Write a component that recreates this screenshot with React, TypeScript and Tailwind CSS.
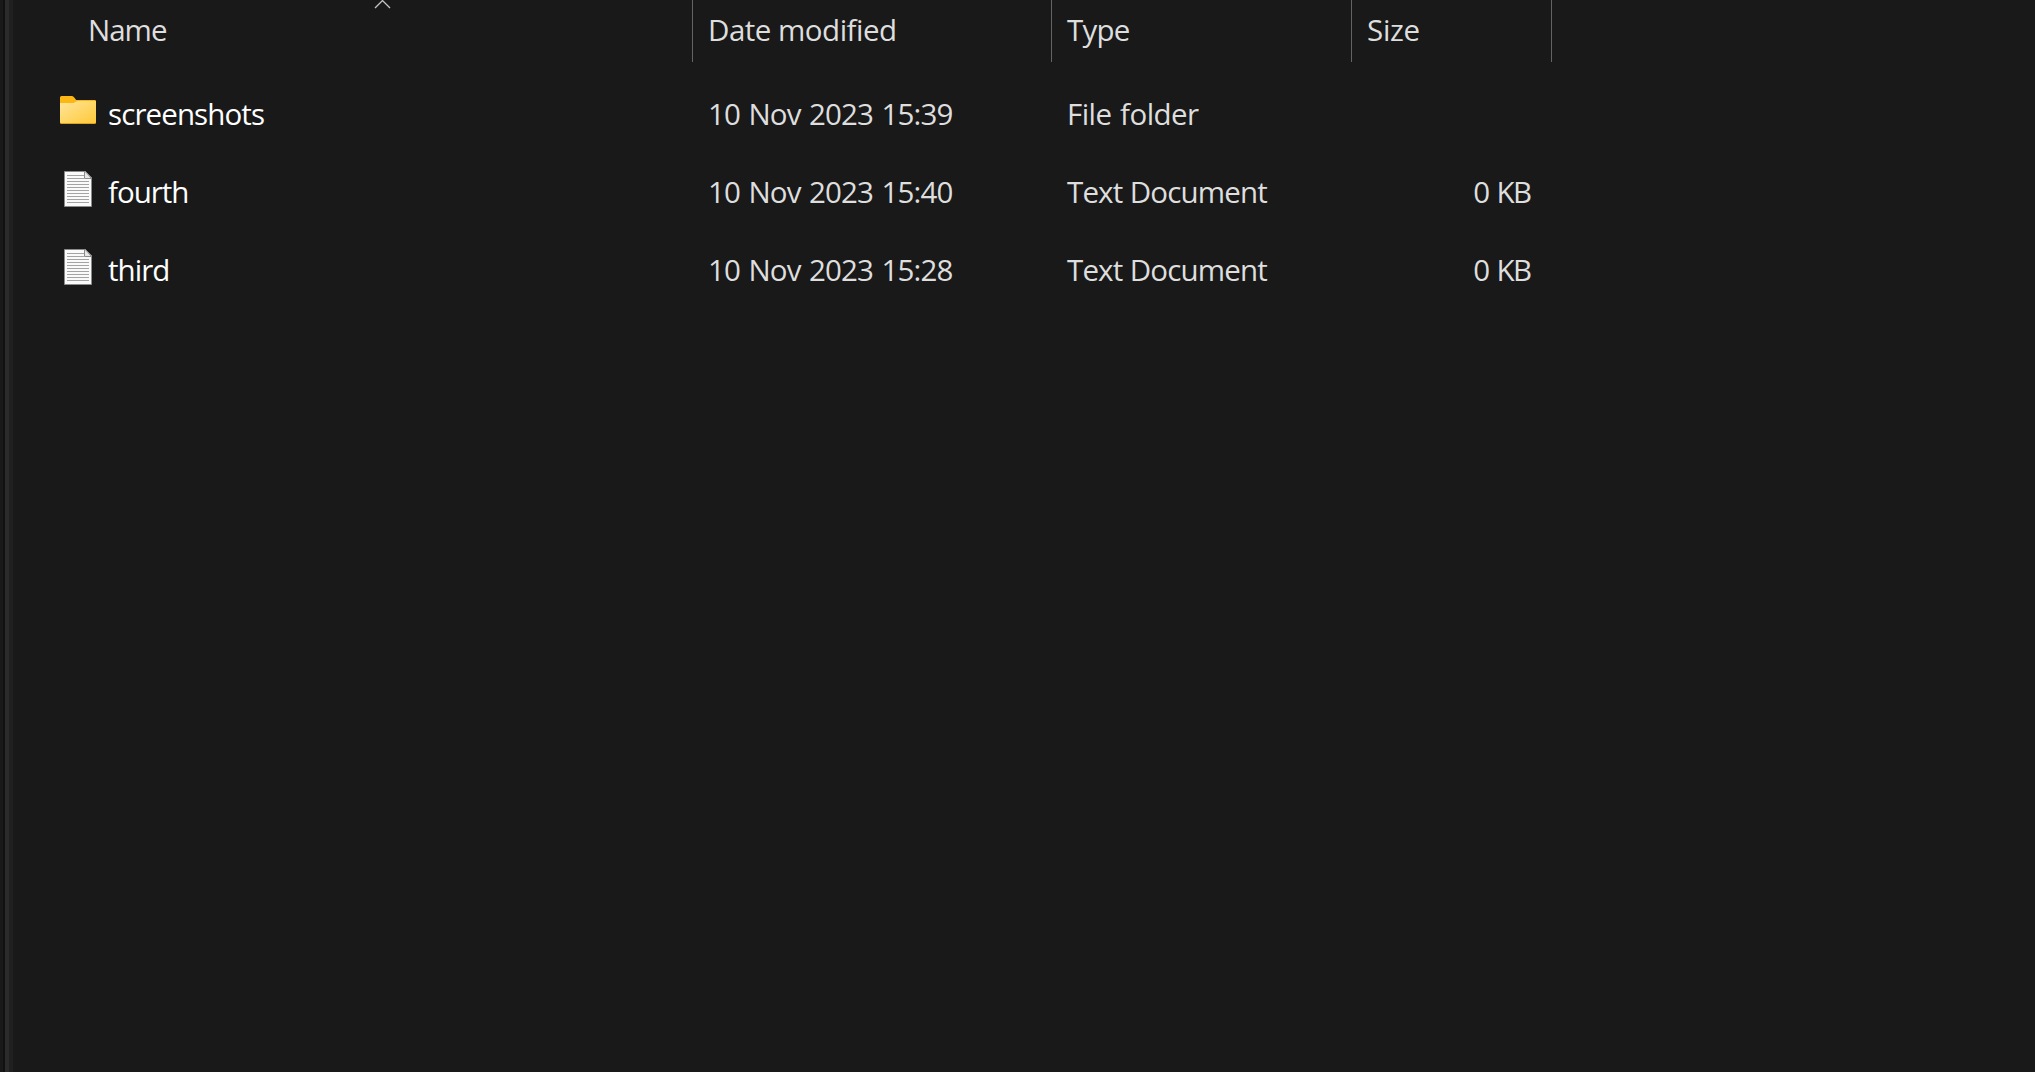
import React from "react";

type Entry = {
  name: string;
  nameTracking: string;
  modified: string;
  type: string;
  typeTracking: string;
  size?: string;
  folder?: boolean;
};

const entries: Entry[] = [
  { name: "screenshots", nameTracking: "tracking-[-0.9px]", modified: "10 Nov 2023 15:39", type: "File folder", typeTracking: "tracking-[-0.55px] [word-spacing:1.5px]", folder: true },
  { name: "fourth", nameTracking: "tracking-[-1px]", modified: "10 Nov 2023 15:40", type: "Text Document", typeTracking: "tracking-[-0.85px] [word-spacing:0.6px]", size: "0 KB" },
  { name: "third", nameTracking: "tracking-[-0.95px]", modified: "10 Nov 2023 15:28", type: "Text Document", typeTracking: "tracking-[-0.85px] [word-spacing:0.6px]", size: "0 KB" },
];

function FolderIcon() {
  return (
    <svg width="36" height="28" viewBox="0 0 36 28" className="shrink-0">
      <defs>
        <linearGradient id="folder-front" x1="0" y1="0" x2="1" y2="1">
          <stop offset="0" stopColor="#ffe59b" />
          <stop offset="1" stopColor="#ffc938" />
        </linearGradient>
      </defs>
      <path d="M0 1.5Q0 0 1.5 0H11.5Q13 0 14 1.2L16.2 4H34.8Q36 4 36 5.2V20H0Z" fill="#fcb715" />
      <path d="M0 7H12.5Q14 7 15 6.2L16 5.4Q16.6 5 17.5 5H36V26.8Q36 28 34.8 28H1.2Q0 28 0 26.8Z" fill="#dda01f" />
      <path d="M0 7H12.5Q14 7 15 6.2L16 5.4Q16.6 5 17.5 5H36V26Q36 27 34.8 27H1.2Q0 27 0 26Z" fill="url(#folder-front)" />
    </svg>
  );
}

function TextFileIcon() {
  const lines = [4, 7, 10, 13, 16, 19, 22, 25, 28, 31];
  return (
    <svg width="28" height="36" viewBox="0 0 28 36" className="mt-[2px] shrink-0">
      <path d="M0.5 0.5H21.5L27.5 6.5V35.5H0.5Z" fill="#fafafa" stroke="#8b8b8b" />
      {lines.map((y) => (
        <rect key={y} x="3" y={y} width={y < 10 ? 17 : 22} height="1" fill="#a3a3a3" />
      ))}
      <path d="M20.5 0.5V7.5H27.5L21.5 0.8Z" fill="#e6e6e6" stroke="#8b8b8b" />
    </svg>
  );
}

export default function App() {
  return (
    <div className="flex h-screen w-full overflow-hidden bg-[#191919] font-['Open_Sans','Noto_Sans',sans-serif] text-[29.5px] whitespace-pre text-[#dedede]">
      <div className="flex w-[13px] shrink-0">
        <div className="w-[3px] bg-[#191919]" />
        <div className="w-[2px] bg-[#111111]" />
        <div className="w-[4px] bg-[#2b2b2b]" />
        <div className="w-[4px] bg-[#202020]" />
      </div>
      <main className="grow">
        <header className="relative flex h-[62px] leading-[59px]">
          <div className="w-[680px] border-r border-[#636363] pl-[75px] tracking-[-1px]">Name</div>
          <div className="w-[359px] border-r border-[#636363] pl-[15px] tracking-[-0.5px]">Date modified</div>
          <div className="w-[300px] border-r border-[#636363] pl-[15px] tracking-[-0.8px]">Type</div>
          <div className="w-[200px] border-r border-[#636363] pl-[15px] tracking-[-0.3px]">Size</div>
          <svg className="absolute top-0 left-[361px]" width="17" height="9" viewBox="0 0 17 9">
            <path d="M1 8L8.5 0.6L16 8" fill="none" stroke="#c4c4c4" strokeWidth="1.4" />
          </svg>
        </header>
        <div className="mt-[9px]">
          {entries.map((e) => (
            <div key={e.name} className="flex h-[78px] leading-[85px]">
              <div className="flex w-[680px] pl-[47px] text-white">
                <div className="flex w-10 items-center pr-1">
                  <div className="flex w-9 justify-center">
                    {e.folder ? <FolderIcon /> : <TextFileIcon />}
                  </div>
                </div>
                <span className={"ml-2 " + e.nameTracking}>{e.name}</span>
              </div>
              <div className="w-[359px] pl-[15px] tracking-[-0.83px] [word-spacing:1.5px]">{e.modified}</div>
              <div className={"w-[300px] pl-[15px] " + e.typeTracking}>{e.type}</div>
              <div className="w-[200px] pr-[21.5px] text-right tracking-[-1.6px] [word-spacing:2px]">{e.size}</div>
            </div>
          ))}
        </div>
      </main>
    </div>
  );
}
